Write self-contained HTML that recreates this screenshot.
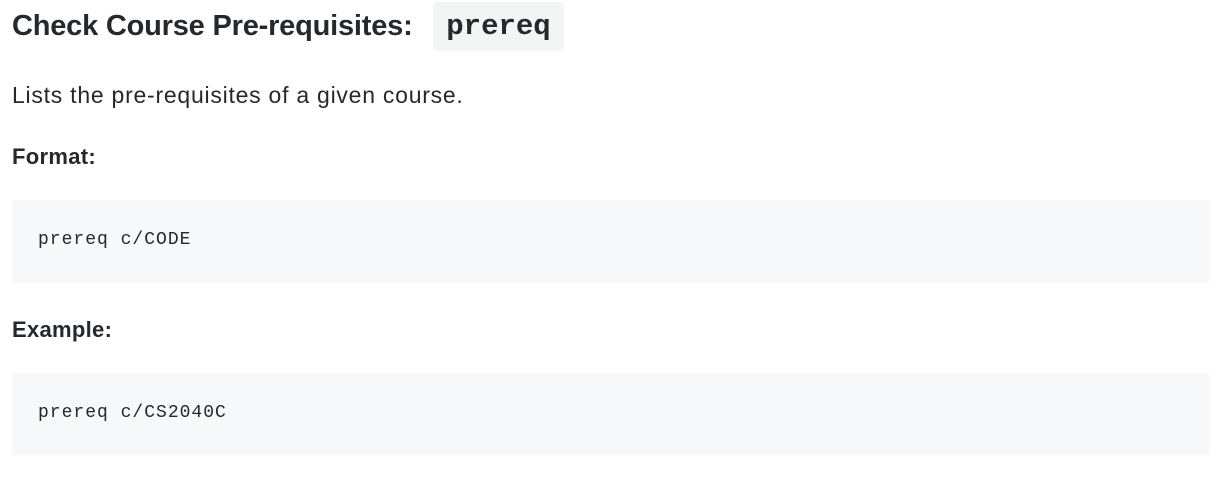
<!DOCTYPE html>
<html><head><meta charset="utf-8"><style>
body{margin:0;width:1226px;height:478px;background:#fff;color:#24292e;font-family:"Liberation Sans",sans-serif;position:relative;overflow:hidden}
.a{position:absolute;white-space:nowrap}
h1{position:absolute;left:12px;top:8px;margin:0;font-size:29px;font-weight:bold;line-height:36px;letter-spacing:-0.2px}
.ic{position:absolute;left:433px;top:2px;width:131px;height:49px;background:#f3f4f4;border-radius:5px;font-family:"Liberation Mono",monospace;font-size:29px;font-weight:bold;line-height:49px;text-align:center}
.pre{position:absolute;left:12px;width:1198px;background:#f6f8fa;border-radius:3px}
.code{position:absolute;left:38px;font-family:"Liberation Mono",monospace;font-size:18px;letter-spacing:1px}
.b{font-size:22px;font-weight:bold;line-height:28px;letter-spacing:0.3px}
</style></head><body>
<h1>Check Course Pre-requisites:</h1>
<div class="ic">prereq</div>
<div class="a" style="left:12px;top:80px;font-size:23px;line-height:30px;letter-spacing:0.75px">Lists the pre-requisites of a given course.</div>
<div class="a b" style="left:12px;top:143px">Format:</div>
<div class="pre" style="top:200px;height:83px"></div>
<div class="a code" style="top:230px">prereq c/CODE</div>
<div class="a b" style="left:12px;top:316px">Example:</div>
<div class="pre" style="top:373px;height:82px"></div>
<div class="a code" style="top:403px">prereq c/CS2040C</div>
</body></html>
